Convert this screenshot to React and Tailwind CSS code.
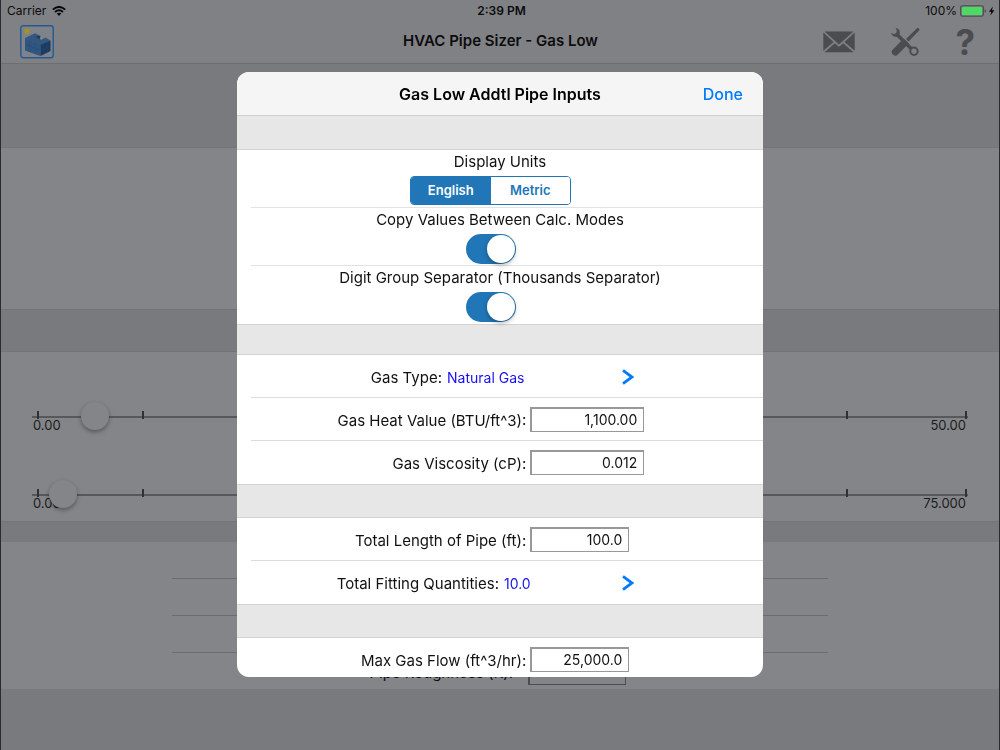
import { useState } from 'react';

const sliders = [
  { id: 'flow', label: 'Gas flow', min: '0.00', max: '50.00', start: 2.7 },
  { id: 'drop', label: 'Pressure drop', min: '0.00', max: '75.000', start: 1.4 },
];

// tick positions along the track, in percent
const ticks = [0.5, 11.7, 25, 50, 75, 87, 99.7];

const AppLogo = () => (
  <svg viewBox="0 0 34 34" className="w-[34px] h-[34px]" aria-hidden="true">
    <rect x="0.8" y="0.8" width="32.4" height="32" rx="2.5" fill="#7f8288" stroke="#245a94" strokeWidth="1.4" />
    <circle cx="7" cy="6.2" r="2.6" fill="#a89318" />
    <path d="M5 13 L15 8.2 L20.5 11 L19.5 13.5 L21 15 L25.5 12.5 L30.5 15.5 L20.5 20.5 Z" fill="#34577d" />
    <path d="M5 13 L20.5 20 V31 L5 25.5 Z" fill="#2f5580" />
    <path d="M20.5 20 L30.5 15.5 V26 L20.5 31 Z" fill="#1b3a5e" />
    <path d="M15.5 11.5 L20.5 11 L19.5 13.5 L21 15.2 Z" fill="#1b3a5e" />
    <path d="M10 15.4 V27.3 M15.3 17.8 V29.2 M5 19 L20.5 25.5 M24 18.5 V29.2 M27.3 17 V27.6 M20.5 25.5 L30.5 20.7" stroke="#284a70" strokeWidth="0.5" fill="none" />
  </svg>
);

const WifiIcon = () => (
  <svg viewBox="0 0 14 10" className="w-[14px] h-[10px]" fill="none" stroke="#08080a" aria-hidden="true">
    <path d="M0.8 3.6 Q7 -1.8 13.2 3.6" strokeWidth="1.9" />
    <path d="M3 6 Q7 2.6 11 6" strokeWidth="1.8" />
    <path d="M4.8 7.6 Q7 6 9.2 7.6 L7 9.9 Z" fill="#08080a" stroke="none" />
  </svg>
);

const BatteryIcon = () => (
  <svg viewBox="0 0 36 12" className="w-[36px] h-[12px]" aria-hidden="true">
    <rect x="0.6" y="0.8" width="22.8" height="10.4" rx="2.2" fill="none" stroke="#4c4d50" strokeWidth="1.1" />
    <rect x="2" y="2.1" width="20" height="7.8" rx="1" fill="#4cd964" />
    <path d="M24.6 4.2 Q26 5 26 6 Q26 7 24.6 7.8 Z" fill="#4c4d50" />
    <path d="M32.8 1.5 L29 6.8 H31.3 L30.4 10.6 L34.4 5.2 H32 Z" fill="#08080a" />
  </svg>
);

const MailIcon = () => (
  <svg viewBox="0 0 32 22" className="w-[32px] h-[22px]" fill="#4b4c4f" aria-hidden="true">
    <path d="M1.5 0.5 H30.5 L16 13.5 Z" />
    <path d="M0.3 1.6 L10.6 11 L0.3 19.8 Z" />
    <path d="M31.7 1.6 L21.4 11 L31.7 19.8 Z" />
    <path d="M1.5 21.2 L11.8 12.2 L16 15.8 L20.2 12.2 L30.5 21.2 Z" />
  </svg>
);

const ToolsIcon = () => (
  <svg viewBox="0 0 30 30" className="w-[30px] h-[30px]" fill="none" stroke="#4b4c4f" aria-hidden="true">
    <path d="M29.4 1.8 L27.4 0.8 L16 12 L18.5 14.5 L29.2 3.4 Z" fill="#4b4c4f" stroke="none" />
    <path d="M13.5 11.5 L18.8 16.5 L7 28.2 Q5 29.6 3 27.6 L2 26.4 Q0.8 24.6 2.4 23 Z" fill="#4b4c4f" stroke="none" />
    <path d="M7.5 8 L21.5 22" strokeWidth="3.6" />
    <path d="M5.5 1 Q10.4 1.6 9.8 6.4 L8 10 Q2.6 10.6 0.8 5.8 L3.6 7 Q6.8 7 6.8 3.6 Z" fill="#4b4c4f" stroke="none" />
    <circle cx="24" cy="24.2" r="3.7" strokeWidth="2" />
  </svg>
);

const Chevron = () => (
  <svg viewBox="0 0 12 16" className="w-[12px] h-[16px]" fill="none" stroke="#007aff" strokeWidth="2.8" aria-hidden="true">
    <path d="M1 1.4 L10 8 L1 14.6" />
  </svg>
);

const ScaleSlider = ({ slider }) => {
  const [value, setValue] = useState(slider.start);

  return (
    <div className="relative h-[78px] pt-[50px]">
      <div className="relative h-7">
        <div className="absolute inset-x-0 top-[14px] h-[2px] bg-[#57585b]" />
        {ticks.map((t) => (
          <div key={t} className="absolute top-[9px] w-[2px] h-[8px] bg-[#303134]" style={{ left: `${t}%` }} />
        ))}
        <input
          id={slider.id}
          aria-label={slider.label}
          type="range"
          min="0"
          max={slider.max}
          step="any"
          value={value}
          onChange={(e) => setValue(Number(e.target.value))}
          className="relative z-10 block w-full h-7 appearance-none bg-transparent [&::-webkit-slider-thumb]:appearance-none [&::-webkit-slider-thumb]:w-7 [&::-webkit-slider-thumb]:h-7 [&::-webkit-slider-thumb]:rounded-full [&::-webkit-slider-thumb]:bg-[#848588] [&::-webkit-slider-thumb]:shadow-[0_2px_4px_rgba(0,0,0,0.35)]"
        />
      </div>
      <div className="flex justify-between -mt-[14px] pl-px pr-[2px] text-[13px] leading-[18px] text-[#1b1c1e]">
        <span>{slider.min}</span>
        <span>{slider.max}</span>
      </div>
    </div>
  );
};

const ToggleRow = ({ id, label, last }) => {
  const [on, setOn] = useState(true);

  return (
    <div className={last ? 'h-[58px]' : 'ml-[14px] h-[58px] border-b border-[#e2e2e4]'}>
      <label htmlFor={id} className={last ? 'block text-center leading-6' : 'block pr-[14px] text-center leading-6'}>
        {label}
      </label>
      <div className={last ? 'flex justify-center pr-[18px] pt-[2px]' : 'flex justify-center pr-8 pt-[2px]'}>
        <input
          id={id}
          type="checkbox"
          role="switch"
          checked={on}
          onChange={(e) => setOn(e.target.checked)}
          className="appearance-none w-[50px] h-[30px] p-px rounded-full bg-[#d8d8da] checked:bg-[#2076b6] before:block before:size-7 before:rounded-full before:bg-white before:shadow-[0_2px_4px_rgba(0,0,0,0.3)] checked:before:ml-5"
        />
      </div>
    </div>
  );
};

const fieldClass = 'h-[25px] px-[6px] bg-white border border-t-2 border-l-2 border-[#98989a] text-right text-sm';

const FieldRow = ({ id, label, initial, wide, line }) => {
  const [value, setValue] = useState(initial);

  return (
    <div className="relative grid grid-cols-[55%_1fr] gap-x-1 items-center h-[43px] pb-px">
      <label htmlFor={id} className="pt-1 text-right whitespace-nowrap">
        {label}
      </label>
      <input
        id={id}
        type="text"
        value={value}
        onChange={(e) => setValue(e.target.value)}
        className={`${fieldClass} ${wide ? 'w-[114px]' : 'w-[99px]'}`}
      />
      {line && <div className="absolute bottom-0 left-[14px] right-0 h-px bg-[#dcdcde]" />}
    </div>
  );
};

const LinkRow = ({ label, value, labelWidth, line }) => (
  <button type="button" className="relative flex items-center w-full h-[43px] pr-[129px]">
    <span className={`pt-[3px] text-right whitespace-nowrap ${labelWidth}`}>{label}</span>
    <span className="flex-1 pt-[3px] pl-[5px] text-left text-sm text-[#1a10f0]">{value}</span>
    <Chevron />
    {line && <span className="absolute bottom-0 left-[14px] right-0 h-px bg-[#dcdcde]" />}
  </button>
);

const InputsDialog = () => {
  const [units, setUnits] = useState('English');

  return (
    <div role="dialog" aria-labelledby="dialog-title" className="w-[526px] max-w-full overflow-hidden rounded-xl bg-white text-[15px] text-[#111]">
      <header className="grid grid-cols-[1fr_auto_1fr] items-center h-11 px-5 bg-[#f5f5f5] border-b border-[#cfcfd1]">
        <h2 id="dialog-title" className="col-start-2 text-base font-semibold text-black">Gas Low Addtl Pipe Inputs</h2>
        <button type="button" className="justify-self-end text-base font-medium text-[#007aff]">Done</button>
      </header>

      <div className="h-[34px] bg-[#e7e7e7] border-b border-[#d4d4d6]" />
      <div className="ml-[14px] h-[58px] border-b border-[#e2e2e4]">
        <div className="pr-[14px] text-center leading-6">Display Units</div>
        <div className="flex justify-center pr-[33px] pt-[2px]">
          <div role="group" aria-label="Display Units" className="grid grid-cols-2 w-[161px] h-[29px] overflow-hidden rounded border border-[#2076b6] text-[13px] font-semibold">
            {['English', 'Metric'].map((u) => (
              <button
                key={u}
                type="button"
                aria-pressed={units === u}
                onClick={() => setUnits(u)}
                className={units === u ? 'bg-[#2076b6] text-white' : 'bg-white text-[#2076b6]'}
              >
                {u}
              </button>
            ))}
          </div>
        </div>
      </div>
      <ToggleRow id="copy" label="Copy Values Between Calc. Modes" />
      <ToggleRow id="digits" label="Digit Group Separator (Thousands Separator)" last />

      <div className="h-[31px] bg-[#e7e7e7] border-y border-[#d4d4d6]" />
      <LinkRow label="Gas Type:" value="Natural Gas" labelWidth="w-[205px]" line />
      <FieldRow id="heat" label="Gas Heat Value (BTU/ft^3):" initial="1,100.00" wide line />
      <FieldRow id="viscosity" label="Gas Viscosity (cP):" initial="0.012" wide />

      <div className="h-[34px] bg-[#e7e7e7] border-y border-[#d4d4d6]" />
      <FieldRow id="length" label="Total Length of Pipe (ft):" initial="100.0" line />
      <LinkRow label="Total Fitting Quantities:" value="10.0" labelWidth="w-[262px]" />

      <div className="h-[34px] bg-[#e7e7e7] border-y border-[#d4d4d6]" />
      <div className="h-[39px]">
        <FieldRow id="maxflow" label="Max Gas Flow (ft^3/hr):" initial="25,000.0" />
      </div>
    </div>
  );
};

const App = () => (
  <div className="min-h-screen flex flex-col bg-[#797a7d] border-x border-[#2b2b2d] font-[Inter,'Liberation_Sans',sans-serif] text-[#0c0c0e]">
    <div className="h-[64px] bg-[#808184] border-b border-[#6d6e71]">
      <div className="grid grid-cols-[1fr_auto_1fr] items-center h-[21px] pl-[6px] pr-[3px] text-xs">
        <div className="flex items-center gap-[6px]">
          Carrier <WifiIcon />
        </div>
        <div className="font-semibold">2:39 PM</div>
        <div className="flex items-center justify-end gap-[3px]">
          100% <BatteryIcon />
        </div>
      </div>
      <div className="grid grid-cols-[1fr_auto_1fr] items-center h-[41px] pl-[19px] pr-[24px]">
        <button type="button" aria-label="Projects" className="justify-self-start">
          <AppLogo />
        </button>
        <h1 className="pl-[6px] text-[15px] font-semibold">HVAC Pipe Sizer - Gas Low</h1>
        <div className="flex items-center justify-end gap-[35px]">
          <button type="button" aria-label="Mail"><MailIcon /></button>
          <button type="button" aria-label="Settings"><ToolsIcon /></button>
          <button type="button" aria-label="Help" className="text-[35px] leading-[36px] font-bold text-[#4b4c4f]">?</button>
        </div>
      </div>
    </div>

    <div className="h-[83px]" />
    <div className="h-[162px] bg-[#848588] border-t border-[#737477]" />
    <div className="h-[42px] border-t border-[#737477]" />
    <div className="h-[170px] px-[31px] bg-[#848588] border-t border-[#737477]">
      {sliders.map((s) => (
        <ScaleSlider key={s.id} slider={s} />
      ))}
    </div>
    <div className="h-[21px] border-t border-[#737477]" />
    <div className="h-[147px] bg-[#848588]">
      <div className="mx-[171px]">
        <div className="h-[37px] border-b border-[#6b6c6f]" />
        <div className="h-[37px] border-b border-[#6b6c6f]" />
        <div className="h-[37px] border-b border-[#6b6c6f]" />
        <div className="grid grid-cols-[52%_1fr] gap-x-[15px] items-center h-[36px] text-[15px]">
          <label htmlFor="roughness" className="pt-1 text-right">Pipe Roughness (ft):</label>
          <input
            id="roughness"
            type="text"
            defaultValue="0.000150"
            className="w-[98px] h-[27px] px-[5px] border border-t-2 border-l-2 border-[#4c4d50] text-right text-sm"
          />
        </div>
      </div>
    </div>

    <div className="fixed inset-0 z-20 flex items-center justify-center pb-px">
      <InputsDialog />
    </div>
  </div>
);

export default App;
